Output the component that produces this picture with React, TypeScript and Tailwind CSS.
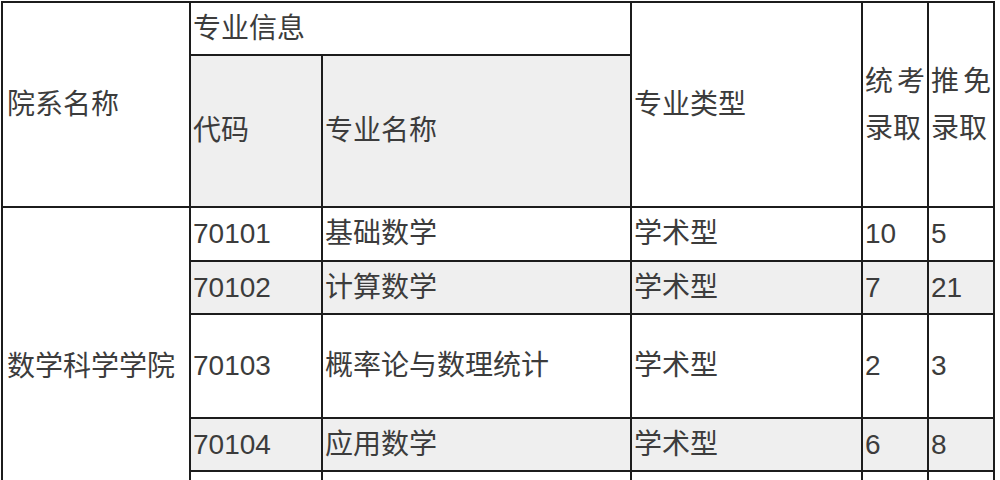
const font = { fontFamily: '"Liberation Sans", "Noto Sans CJK SC", sans-serif' };

type Row = { code: string; name: string; type: string; exam: string; free: string; gray: boolean };

const rows: Row[] = [
    { code: "70101", name: "基础数学", type: "学术型", exam: "10", free: "5", gray: false },
    { code: "70102", name: "计算数学", type: "学术型", exam: "7", free: "21", gray: true },
    { code: "70103", name: "概率论与数理统计", type: "学术型", exam: "2", free: "3", gray: false },
    { code: "70104", name: "应用数学", type: "学术型", exam: "6", free: "8", gray: true },
    { code: "", name: "", type: "", exam: "", free: "", gray: false },
];

const Cell = ({ children, className = "" }: { children?: React.ReactNode; className?: string }) => (
    <div className={`flex items-center pl-[2px] whitespace-nowrap ${className}`}>{children}</div>
);

const StackedHead = ({ top, bottom }: { top: [string, string]; bottom: string }) => (
    <div className="flex flex-col w-full leading-[47px]">
        <div className="flex justify-between pr-[2px]">
            <span>{top[0]}</span>
            <span>{top[1]}</span>
        </div>
        <span>{bottom}</span>
    </div>
);

export default function App() {
    return (
        <div className="w-[1000px] h-[480px] overflow-hidden bg-white" style={font}>
            <div
                className="ml-[1px] mt-[1px] w-[994px] grid gap-[2px] p-[2px] bg-[#1c1c1c] text-[28px] text-[#3c3c3c]"
                style={{
                    gridTemplateColumns: "186px 130px 307px 229px 64px 64px",
                    gridTemplateRows: "51px 150px 52px 51px 102px 51px 60px",
                }}
            >
                <Cell className="row-span-2 col-start-1 bg-white pl-[4px]">院系名称</Cell>
                <Cell className="col-span-2 col-start-2 row-start-1 bg-white">专业信息</Cell>
                <Cell className="row-span-2 col-start-4 row-start-1 bg-white">专业类型</Cell>
                <Cell className="row-span-2 col-start-5 row-start-1 bg-white">
                    <StackedHead top={["统", "考"]} bottom="录取" />
                </Cell>
                <Cell className="row-span-2 col-start-6 row-start-1 bg-white">
                    <StackedHead top={["推", "免"]} bottom="录取" />
                </Cell>
                <Cell className="col-start-2 row-start-2 bg-[#efefef]">代码</Cell>
                <Cell className="col-start-3 row-start-2 bg-[#efefef]">专业名称</Cell>

                <Cell className="col-start-1 row-start-3 row-span-5 bg-white pl-[4px] items-start pt-[138px]">数学科学学院</Cell>

                {rows.map((r, i) => {
                    const bg = r.gray ? "bg-[#efefef]" : "bg-white";
                    return [
                        <Cell key={`c${i}`} className={`col-start-2 ${bg}`}>{r.code}</Cell>,
                        <Cell key={`n${i}`} className={`col-start-3 ${bg}`}>{r.name}</Cell>,
                        <Cell key={`t${i}`} className={`col-start-4 ${bg}`}>{r.type}</Cell>,
                        <Cell key={`e${i}`} className={`col-start-5 ${bg}`}>{r.exam}</Cell>,
                        <Cell key={`f${i}`} className={`col-start-6 ${bg}`}>{r.free}</Cell>,
                    ];
                })}
            </div>
        </div>
    );
}
